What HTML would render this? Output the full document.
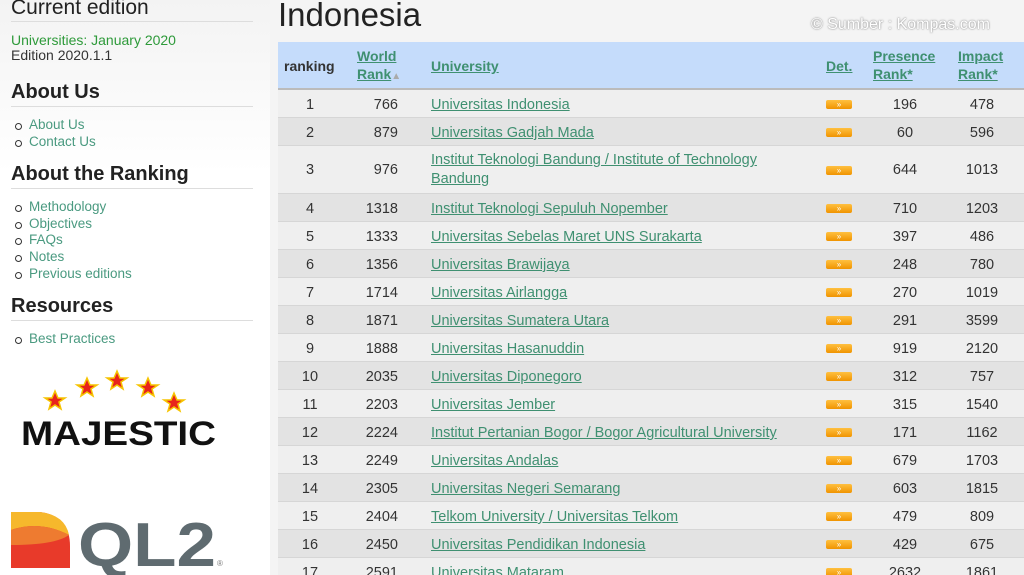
<!DOCTYPE html>
<html><head><meta charset="utf-8"><style>
*{margin:0;padding:0;box-sizing:border-box}
html,body{width:1024px;height:575px;overflow:hidden}
body{background:#f4f4f4;font-family:"Liberation Sans",Arial,sans-serif;position:relative;color:#333}
.side{position:absolute;left:0;top:0;width:270px;height:575px;background:linear-gradient(#f3f3f3,#fff 30%)}
h2{position:absolute;left:11px;font-weight:normal;color:#222;font-size:21px;width:242px;border-bottom:1px solid #ddd;padding-bottom:1px}
h3{position:absolute;left:11px;font-size:20px;color:#222;width:242px;border-bottom:1px solid #ddd;padding-bottom:2px}
ul{position:absolute;left:15px;list-style:none;font-size:13.5px;line-height:16.7px}
ul li{color:#4a9a80;padding-left:14px;position:relative}
ul li:before{content:"";position:absolute;left:0;top:6px;width:5px;height:5px;border:1.5px solid #333;border-radius:50%}
.title{position:absolute;left:278px;top:-4px;font-size:33px;color:#222}
.src{position:absolute;left:811px;top:16px;font-size:16px;color:#fff;text-shadow:0 0 2px #999,0 0 1px #888}
.hdr{position:absolute;left:278px;top:42px;width:746px;height:48px;background:#c5dcfb;border-bottom:2px solid #bbb}
.hdr span{position:absolute;font-size:14px;font-weight:bold;line-height:18px}
.hdr a{color:#3f9071;text-decoration:underline}
.row{position:absolute;left:278px;width:746px;height:28px;font-size:14.5px;border-bottom:1px solid #d6d6d6}
.row span{position:absolute;top:7px;color:#333}
.c1{left:0;width:64px;text-align:center}
.c2{left:66px;width:54px;text-align:right}
.c3{left:153px;color:#3f9071!important;text-decoration:underline;line-height:19px;top:6px!important}
.c4{left:548px;top:10px!important;width:26px;height:9px;background:linear-gradient(#ffc040,#f09400);border-radius:2px;color:#fff!important;font-size:8px;text-align:center;line-height:9px}
.c5{left:597px;width:60px;text-align:center}
.c6{left:674px;width:60px;text-align:center}
</style></head><body>
<div class="side"></div>
<h2 style="top:-4px">Current edition</h2>
<div style="position:absolute;left:11px;top:33px;font-size:14px;line-height:15px"><span style="color:#2e9a3a">Universities: January 2020</span><br><span style="color:#333">Edition 2020.1.1</span></div>
<h3 style="top:81px">About Us</h3>
<ul style="top:117px"><li>About Us</li><li>Contact Us</li></ul>
<h3 style="top:163px">About the Ranking</h3>
<ul style="top:199px"><li>Methodology</li><li>Objectives</li><li>FAQs</li><li>Notes</li><li>Previous editions</li></ul>
<h3 style="top:295px">Resources</h3>
<ul style="top:331px"><li>Best Practices</li></ul>
<svg style="position:absolute;left:0;top:360px" width="270" height="215">
<g fill="#e8231c" stroke="#f6c400" stroke-width="1.5">
<polygon points="55,31 58,38 65,38 59,42 61,49 55,45 49,49 51,42 45,38 52,38"/>
<polygon points="87,18 90,25 97,25 91,29 93,36 87,32 81,36 83,29 77,25 84,25"/>
<polygon points="117,11 120,18 127,18 121,22 123,29 117,25 111,29 113,22 107,18 114,18"/>
<polygon points="148,18 151,25 158,25 152,29 154,36 148,32 142,36 144,29 138,25 145,25"/>
<polygon points="174,33 177,40 184,40 178,44 180,51 174,47 168,51 170,44 164,40 171,40"/>
</g>
<text x="21" y="85" font-family="Liberation Sans" font-weight="bold" font-size="34" fill="#111" textLength="195" lengthAdjust="spacingAndGlyphs">MAJESTIC</text>
<path d="M11,152 L40,152 Q70,156 70,186 L70,208 L11,208 Z" fill="#e83a2a"/>
<path d="M11,152 L40,152 Q65,155 69,175 Q40,160 11,170 Z" fill="#f6b82c"/>
<path d="M11,170 Q40,160 69,175 Q55,185 11,185 Z" fill="#ee7b30"/>
<text x="78" y="206" font-family="Liberation Sans" font-weight="bold" font-size="62" fill="#5f6b70" textLength="138" lengthAdjust="spacingAndGlyphs">QL2</text>
<text x="217" y="206" font-size="8" fill="#777">®</text>
</svg>
<div class="title">Indonesia</div>
<div class="src">© Sumber : Kompas.com</div>
<div class="hdr">
<span style="left:6px;top:15px;color:#333">ranking</span>
<span style="left:79px;top:5px"><a>World</a><br><a>Rank</a><span style="position:relative;color:#aaa;font-size:10px">▲</span></span>
<span style="left:153px;top:15px"><a>University</a></span>
<span style="left:548px;top:15px"><a>Det.</a></span>
<span style="left:595px;top:5px"><a>Presence</a><br><a>Rank*</a></span>
<span style="left:680px;top:5px"><a>Impact</a><br><a>Rank*</a></span>
</div>
<div class="row" style="top:90px;background:#efefef"><span class="c1">1</span><span class="c2">766</span><span class="c3">Universitas Indonesia</span><span class="c4">»</span><span class="c5">196</span><span class="c6">478</span></div>
<div class="row" style="top:118px;background:#e3e3e3"><span class="c1">2</span><span class="c2">879</span><span class="c3">Universitas Gadjah Mada</span><span class="c4">»</span><span class="c5">60</span><span class="c6">596</span></div>
<div class="row" style="top:146px;height:48px;background:#efefef"><span class="c1" style="top:16px">3</span><span class="c2" style="top:16px">976</span><span class="c3" style="top:5px!important">Institut Teknologi Bandung / Institute of Technology<br>Bandung</span><span class="c4" style="top:20px!important">»</span><span class="c5" style="top:16px">644</span><span class="c6" style="top:16px">1013</span></div>
<div class="row" style="top:194px;background:#e3e3e3"><span class="c1">4</span><span class="c2">1318</span><span class="c3">Institut Teknologi Sepuluh Nopember</span><span class="c4">»</span><span class="c5">710</span><span class="c6">1203</span></div>
<div class="row" style="top:222px;background:#efefef"><span class="c1">5</span><span class="c2">1333</span><span class="c3">Universitas Sebelas Maret UNS Surakarta</span><span class="c4">»</span><span class="c5">397</span><span class="c6">486</span></div>
<div class="row" style="top:250px;background:#e3e3e3"><span class="c1">6</span><span class="c2">1356</span><span class="c3">Universitas Brawijaya</span><span class="c4">»</span><span class="c5">248</span><span class="c6">780</span></div>
<div class="row" style="top:278px;background:#efefef"><span class="c1">7</span><span class="c2">1714</span><span class="c3">Universitas Airlangga</span><span class="c4">»</span><span class="c5">270</span><span class="c6">1019</span></div>
<div class="row" style="top:306px;background:#e3e3e3"><span class="c1">8</span><span class="c2">1871</span><span class="c3">Universitas Sumatera Utara</span><span class="c4">»</span><span class="c5">291</span><span class="c6">3599</span></div>
<div class="row" style="top:334px;background:#efefef"><span class="c1">9</span><span class="c2">1888</span><span class="c3">Universitas Hasanuddin</span><span class="c4">»</span><span class="c5">919</span><span class="c6">2120</span></div>
<div class="row" style="top:362px;background:#e3e3e3"><span class="c1">10</span><span class="c2">2035</span><span class="c3">Universitas Diponegoro</span><span class="c4">»</span><span class="c5">312</span><span class="c6">757</span></div>
<div class="row" style="top:390px;background:#efefef"><span class="c1">11</span><span class="c2">2203</span><span class="c3">Universitas Jember</span><span class="c4">»</span><span class="c5">315</span><span class="c6">1540</span></div>
<div class="row" style="top:418px;background:#e3e3e3"><span class="c1">12</span><span class="c2">2224</span><span class="c3">Institut Pertanian Bogor / Bogor Agricultural University</span><span class="c4">»</span><span class="c5">171</span><span class="c6">1162</span></div>
<div class="row" style="top:446px;background:#efefef"><span class="c1">13</span><span class="c2">2249</span><span class="c3">Universitas Andalas</span><span class="c4">»</span><span class="c5">679</span><span class="c6">1703</span></div>
<div class="row" style="top:474px;background:#e3e3e3"><span class="c1">14</span><span class="c2">2305</span><span class="c3">Universitas Negeri Semarang</span><span class="c4">»</span><span class="c5">603</span><span class="c6">1815</span></div>
<div class="row" style="top:502px;background:#efefef"><span class="c1">15</span><span class="c2">2404</span><span class="c3">Telkom University / Universitas Telkom</span><span class="c4">»</span><span class="c5">479</span><span class="c6">809</span></div>
<div class="row" style="top:530px;background:#e3e3e3"><span class="c1">16</span><span class="c2">2450</span><span class="c3">Universitas Pendidikan Indonesia</span><span class="c4">»</span><span class="c5">429</span><span class="c6">675</span></div>
<div class="row" style="top:558px;background:#efefef"><span class="c1">17</span><span class="c2">2591</span><span class="c3">Universitas Mataram</span><span class="c4">»</span><span class="c5">2632</span><span class="c6">1861</span></div>
</body></html>
